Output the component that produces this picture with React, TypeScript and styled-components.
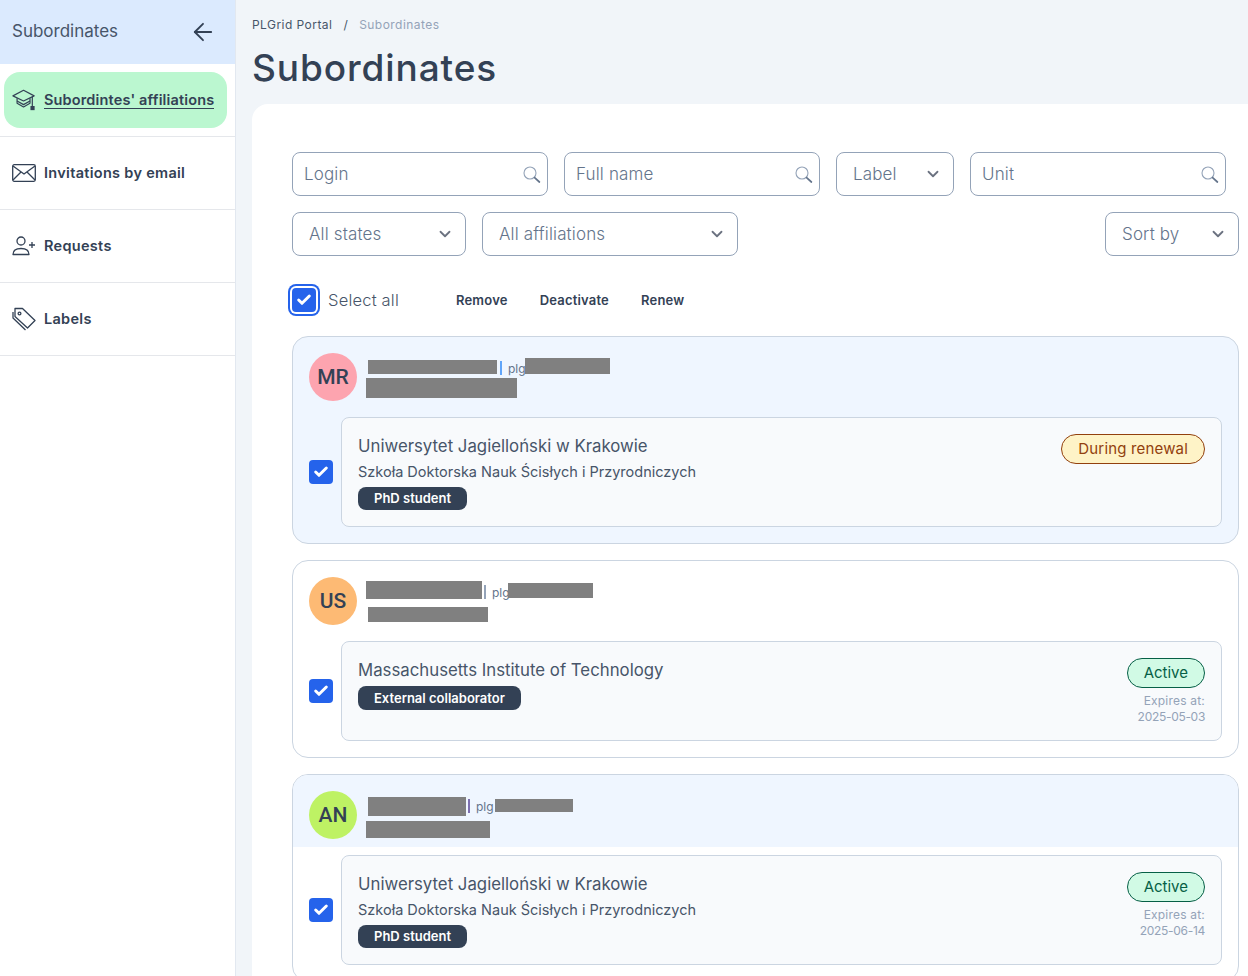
import { ArrowLeft, Check, ChevronDown } from 'lucide-react'
import styled, { createGlobalStyle } from 'styled-components'

const GlobalStyle = createGlobalStyle`
    html, body {
        margin: 0;
        height: 976px;
        overflow: hidden;
        background: #f1f5f9;
        color: #334155;
        font-family: Inter, 'Noto Sans', sans-serif;
    }
    * {
        box-sizing: border-box;
    }
`

function CapIcon() {
    return (
        <svg width='26' height='24' viewBox='0 0 26 24' fill='none' stroke='#334155' strokeWidth='1.3' strokeLinejoin='round'>
            <path d='M1 7.5 L12.5 1.5 L24 7.5 L12.5 13 Z' />
            <path d='M5.5 10 V15.5 L12.5 19.5 L19.5 15.5 V10' />
            <path d='M5.5 13 L12.5 17 L19.5 13' />
            <path d='M22 8.5 V19' />
            <rect x='20' y='18.5' width='4.5' height='4.5' fill='#334155' stroke='none' />
        </svg>
    )
}

function MailIcon() {
    return (
        <svg width='24' height='18' viewBox='0 0 24 18' fill='none' stroke='#334155' strokeWidth='1.3' strokeLinejoin='round'>
            <rect x='0.7' y='0.7' width='22.6' height='16.6' rx='1.5' />
            <path d='M1 2 L12 10 L23 2' />
            <path d='M1 16 L9 8 M23 16 L15 8' />
        </svg>
    )
}

function UserPlusIcon() {
    return (
        <svg width='24' height='20' viewBox='0 0 24 20' fill='none' stroke='#334155' strokeWidth='1.3' strokeLinejoin='round'>
            <circle cx='9' cy='5' r='4' />
            <path d='M1 18.5 C1 14.5 4 12.5 9 12.5 C14 12.5 17 14.5 17 18.5 Z' />
            <path d='M20 6 V12 M17 9 H23' />
        </svg>
    )
}

function TagsIcon() {
    return (
        <svg width='24' height='24' viewBox='0 0 24 24' fill='none' stroke='#334155' strokeWidth='1.3' strokeLinejoin='round'>
            <path d='M3 1.5 H10.5 L23 13.5 L15.5 21 L3 9.5 Z' />
            <circle cx='7.5' cy='6.5' r='1.4' />
            <path d='M1 5 V11 L13.5 23' />
        </svg>
    )
}

function SearchIcon() {
    return (
        <svg width='18' height='18' viewBox='0 0 18 18' fill='none' strokeLinecap='round'>
            <circle cx='7' cy='7' r='6' stroke='#94a3b8' strokeWidth='1.1' />
            <path d='M11.6 11.6 L16.4 16' stroke='#64748b' strokeWidth='1.7' />
        </svg>
    )
}

const navItems = [
    { label: "Subordintes' affiliations", icon: <CapIcon />, active: true },
    { label: 'Invitations by email', icon: <MailIcon /> },
    { label: 'Requests', icon: <UserPlusIcon /> },
    { label: 'Labels', icon: <TagsIcon /> },
]

type Block = { w: number; h: number; mt: number; ml: number }

type Person = {
    initials: string
    avatar: string
    tint: 'all' | 'head' | 'none'
    first: Block
    sep: string
    sepGap: number
    plgBlock: Block
    second: Block
    unit: string
    faculty?: string
    role: string
    status: 'renewal' | 'active'
    expires?: string
}

const people: Person[] = [
    {
        initials: 'MR',
        avatar: '#fda4af',
        tint: 'all',
        first: { w: 129, h: 14, mt: 7, ml: 2 },
        sep: '#60a5fa',
        sepGap: 3,
        plgBlock: { w: 85, h: 16, mt: 5, ml: 0 },
        second: { w: 151, h: 20, mt: 4, ml: 0 },
        unit: 'Uniwersytet Jagielloński w Krakowie',
        faculty: 'Szkoła Doktorska Nauk Ścisłych i Przyrodniczych',
        role: 'PhD student',
        status: 'renewal',
    },
    {
        initials: 'US',
        avatar: '#fdba74',
        tint: 'none',
        first: { w: 116, h: 18, mt: 4, ml: 0 },
        sep: '#94a3b8',
        sepGap: 2,
        plgBlock: { w: 85, h: 15, mt: 6, ml: -1 },
        second: { w: 120, h: 15, mt: 9, ml: 2 },
        unit: 'Massachusetts Institute of Technology',
        role: 'External collaborator',
        status: 'active',
        expires: '2025-05-03',
    },
    {
        initials: 'AN',
        avatar: '#bef264',
        tint: 'head',
        first: { w: 98, h: 19, mt: 6, ml: 2 },
        sep: '#7c6fb0',
        sepGap: 2,
        plgBlock: { w: 78, h: 13, mt: 8, ml: 2 },
        second: { w: 124, h: 17, mt: 9, ml: 0 },
        unit: 'Uniwersytet Jagielloński w Krakowie',
        faculty: 'Szkoła Doktorska Nauk Ścisłych i Przyrodniczych',
        role: 'PhD student',
        status: 'active',
        expires: '2025-06-14',
    },
]

function SearchField({ label }: { label: string }) {
    return (
        <Field $w={256} $pl={11}>
            <Placeholder>{label}</Placeholder>
            <FieldSearch>
                <SearchIcon />
            </FieldSearch>
        </Field>
    )
}

function SelectField({ label, w }: { label: string; w: number }) {
    return (
        <Field $w={w} $pl={16}>
            <Placeholder>{label}</Placeholder>
            <FieldChevron>
                <ChevronDown size={18} strokeWidth={2.4} />
            </FieldChevron>
        </Field>
    )
}

function Tick({ focused }: { focused?: boolean }) {
    return (
        <Checkbox $focused={focused}>
            <Check size={16} strokeWidth={4.4} color='#fff' />
        </Checkbox>
    )
}

function PersonCard({ person }: { person: Person }) {
    return (
        <Card $tint={person.tint === 'all'}>
            <CardHead $tint={person.tint === 'head'} $compact={person.tint === 'head'}>
                <Avatar $bg={person.avatar}>{person.initials}</Avatar>
                <Identity>
                    <NameRow>
                        <Redacted $b={person.first} />
                        <Separator $color={person.sep} $gap={person.sepGap} />
                        <Login>plg</Login>
                        <Redacted $b={person.plgBlock} />
                    </NameRow>
                    <Redacted $b={person.second} />
                </Identity>
            </CardHead>
            <CardBody $tight={person.tint === 'head'}>
                <Tick />
                <Affiliation>
                    <AffiliationText>
                        <UnitName>{person.unit}</UnitName>
                        {person.faculty && <Faculty>{person.faculty}</Faculty>}
                        <RoleTag $afterFaculty={!!person.faculty}>{person.role}</RoleTag>
                    </AffiliationText>
                    <StatusColumn>
                        <StatusPill $status={person.status}>
                            {person.status === 'renewal' ? 'During renewal' : 'Active'}
                        </StatusPill>
                        {person.expires && (
                            <Expires>
                                Expires at:
                                <br />
                                <ExpiresDate>{person.expires}</ExpiresDate>
                            </Expires>
                        )}
                    </StatusColumn>
                </Affiliation>
            </CardBody>
        </Card>
    )
}

export default function App() {
    return (
        <Page>
            <GlobalStyle />
            <Sidebar>
                <SideHeader>
                    <span>Subordinates</span>
                    <ArrowLeft size={28} strokeWidth={1.6} />
                </SideHeader>
                {navItems.map((item) => (
                    <NavRow key={item.label}>
                        <NavLink $active={item.active}>
                            <NavIcon>{item.icon}</NavIcon>
                            <NavLabel $active={item.active}>{item.label}</NavLabel>
                        </NavLink>
                    </NavRow>
                ))}
            </Sidebar>
            <Main>
                <Breadcrumb>
                    <span>PLGrid Portal</span>
                    <Slash>/</Slash>
                    <Current>Subordinates</Current>
                </Breadcrumb>
                <Title>Subordinates</Title>
                <Panel>
                    <FilterRow>
                        <SearchField label='Login' />
                        <SearchField label='Full name' />
                        <SelectField label='Label' w={118} />
                        <SearchField label='Unit' />
                    </FilterRow>
                    <FilterRow>
                        <SelectField label='All states' w={174} />
                        <SelectField label='All affiliations' w={256} />
                        <SortSlot>
                            <SelectField label='Sort by' w={134} />
                        </SortSlot>
                    </FilterRow>
                    <BulkRow>
                        <Tick focused />
                        <SelectAll>Select all</SelectAll>
                        <BulkActions>
                            <BulkButton>Remove</BulkButton>
                            <BulkButton>Deactivate</BulkButton>
                            <BulkButton>Renew</BulkButton>
                        </BulkActions>
                    </BulkRow>
                    <CardList>
                        {people.map((person) => (
                            <PersonCard key={person.initials} person={person} />
                        ))}
                    </CardList>
                </Panel>
            </Main>
        </Page>
    )
}

const Page = styled.div`
    display: flex;
    width: 1248px;
    height: 976px;
    overflow: hidden;
`

const Sidebar = styled.aside`
    flex: 0 0 236px;
    background: #fff;
    border-right: 1px solid #e2e8f0;
`

const SideHeader = styled.div`
    display: flex;
    align-items: center;
    justify-content: space-between;
    height: 64px;
    padding: 0 18px 0 12px;
    background: #dbeafe;
    font-size: 17px;
    color: #475569;

    span {
        margin-bottom: 2px;
    }

    svg {
        color: #334155;
    }
`

const NavRow = styled.div`
    height: 73px;
    padding: 8px 8px 8px 4px;
    border-bottom: 1px solid #e5e7eb;
`

const NavLink = styled.div<{ $active?: boolean }>`
    display: flex;
    align-items: center;
    gap: 8px;
    height: 56px;
    padding-left: 8px;
    border-radius: 16px;
    background: ${(p) => (p.$active ? '#bbf7d0' : 'transparent')};
`

const NavIcon = styled.span`
    display: flex;
    justify-content: center;
    width: 24px;
`

const NavLabel = styled.span<{ $active?: boolean }>`
    font-size: 14.5px;
    font-weight: 600;
    letter-spacing: ${(p) => (p.$active ? '0.15px' : '0.3px')};
    color: #334155;
    border-bottom: 1px solid ${(p) => (p.$active ? '#334155' : 'transparent')};
    margin-bottom: ${(p) => (p.$active ? '0' : '1px')};
`

const Main = styled.main`
    flex: 1;
    min-width: 0;
    padding-left: 16px;
`

const Breadcrumb = styled.div`
    display: flex;
    align-items: center;
    height: 18px;
    margin-top: 15px;
    font-size: 12px;
    letter-spacing: 0.45px;
    color: #475569;
`

const Slash = styled.span`
    margin: 0 11px;
`

const Current = styled.span`
    color: #94a3b8;
`

const Title = styled.h1`
    margin: 0;
    height: 71px;
    padding-top: 12px;
    font-size: 37px;
    line-height: 46px;
    font-weight: 500;
    letter-spacing: 0.9px;
    color: #334155;
`

const Panel = styled.section`
    width: 1000px;
    height: 900px;
    padding: 48px 0 0 40px;
    background: #fff;
    border-radius: 16px 0 0 0;
`

const FilterRow = styled.div`
    display: flex;
    gap: 16px;
    width: 947px;
    margin-bottom: 16px;
`

const Field = styled.div<{ $w: number; $pl: number }>`
    position: relative;
    display: flex;
    align-items: center;
    width: ${(p) => p.$w}px;
    height: 44px;
    padding-left: ${(p) => p.$pl}px;
    border: 1px solid #94a3b8;
    border-radius: 8px;
    background: #fff;
`

const Placeholder = styled.span`
    font-size: 17px;
    font-weight: 300;
    letter-spacing: 0.15px;
    color: #64748b;
`

const FieldSearch = styled.span`
    position: absolute;
    top: 13px;
    right: 6px;
    display: flex;
`

const FieldChevron = styled.span`
    position: absolute;
    top: 12px;
    right: 11px;
    display: flex;
    color: #6b7280;
`

const SortSlot = styled.div`
    margin-left: auto;
`

const BulkRow = styled.div`
    display: flex;
    align-items: center;
    height: 32px;
    margin: 28px 0 20px;
`

const Checkbox = styled.span<{ $focused?: boolean }>`
    display: flex;
    flex: 0 0 24px;
    align-items: center;
    justify-content: center;
    width: 24px;
    height: 24px;
    border-radius: 4px;
    background: #2563eb;
    box-shadow: ${(p) => (p.$focused ? '0 0 0 2px #fff, 0 0 0 4px #2563eb' : 'none')};
`

const SelectAll = styled.span`
    margin-left: 12px;
    font-size: 16.5px;
    font-weight: 300;
    letter-spacing: 0.2px;
    color: #475569;
`

const BulkActions = styled.div`
    display: flex;
    gap: 32px;
    margin-left: 57px;
`

const BulkButton = styled.span`
    font-size: 13px;
    font-weight: 600;
    letter-spacing: 0.2px;
    color: #334155;
`

const CardList = styled.div`
    display: flex;
    flex-direction: column;
    gap: 16px;
    width: 947px;
`

const Card = styled.article<{ $tint: boolean }>`
    overflow: hidden;
    border: 1px solid #cbd5e1;
    border-radius: 16px;
    background: ${(p) => (p.$tint ? '#eff6ff' : '#fff')};
`

const CardHead = styled.header<{ $tint: boolean; $compact: boolean }>`
    display: flex;
    gap: 9px;
    height: ${(p) => (p.$compact ? '72px' : '80px')};
    padding: 16px 16px 0;
    background: ${(p) => (p.$tint ? '#eff6ff' : 'transparent')};
`

const Avatar = styled.div<{ $bg: string }>`
    display: flex;
    flex: 0 0 48px;
    align-items: center;
    justify-content: center;
    height: 48px;
    padding-bottom: 1px;
    border-radius: 50%;
    background: ${(p) => p.$bg};
    font-family: Roboto, sans-serif;
    font-size: 21px;
    font-weight: 500;
    color: #334155;
`

const Identity = styled.div`
    display: flex;
    flex-direction: column;
    align-items: flex-start;
`

const NameRow = styled.div`
    display: flex;
    align-items: flex-start;
    height: 21px;
`

const Redacted = styled.div<{ $b: Block }>`
    flex: none;
    width: ${(p) => p.$b.w}px;
    height: ${(p) => p.$b.h}px;
    margin-top: ${(p) => p.$b.mt}px;
    margin-left: ${(p) => p.$b.ml}px;
    background: #808080;
`

const Separator = styled.span<{ $color: string; $gap: number }>`
    flex: none;
    width: 2px;
    height: 14px;
    margin: 8px 0 0 ${(p) => p.$gap}px;
    background: ${(p) => p.$color};
`

const Login = styled.span`
    width: 17px;
    margin: 8px 0 0 6px;
    font-size: 12px;
    line-height: 15px;
    color: #64748b;
`

const CardBody = styled.div<{ $tight: boolean }>`
    display: flex;
    align-items: center;
    gap: 8px;
    padding: ${(p) => (p.$tight ? '8px' : '0')} 16px 16px;
`

const Affiliation = styled.div`
    display: flex;
    flex: 1;
    justify-content: space-between;
    padding: 15px 16px;
    border: 1px solid #cbd5e1;
    border-radius: 8px;
    background: #f8fafc;
`

const AffiliationText = styled.div`
    display: flex;
    flex-direction: column;
    align-items: flex-start;
    padding-bottom: 1px;
`

const UnitName = styled.div`
    height: 26px;
    font-size: 16.8px;
    line-height: 26px;
    color: #475569;
`

const Faculty = styled.div`
    height: 26px;
    font-size: 14.5px;
    line-height: 26px;
    color: #475569;
`

const RoleTag = styled.span<{ $afterFaculty: boolean }>`
    height: ${(p) => (p.$afterFaculty ? '23px' : '24px')};
    margin-top: ${(p) => (p.$afterFaculty ? '2px' : '3px')};
    padding: 0 16px;
    border-radius: 8px;
    background: #334155;
    font-size: 13px;
    font-weight: 600;
    line-height: ${(p) => (p.$afterFaculty ? '23px' : '24px')};
    color: #fff;
`

const StatusColumn = styled.div`
    display: flex;
    flex-direction: column;
    align-items: flex-end;
    padding-top: 1px;
`

const StatusPill = styled.span<{ $status: 'renewal' | 'active' }>`
    height: 30px;
    padding: 0 16px;
    border: 1px solid ${(p) => (p.$status === 'renewal' ? '#92400e' : '#065f46')};
    border-radius: 15px;
    background: ${(p) => (p.$status === 'renewal' ? '#fef3c7' : '#d1fae5')};
    font-size: 15px;
    line-height: 28px;
    letter-spacing: ${(p) => (p.$status === 'renewal' ? '0.17px' : '0')};
    color: ${(p) => (p.$status === 'renewal' ? '#92400e' : '#065f46')};
`

const Expires = styled.div`
    margin-top: 5px;
    font-size: 12px;
    line-height: 16px;
    letter-spacing: 0.2px;
    text-align: right;
    color: #94a3b8;
`

const ExpiresDate = styled.span`
    letter-spacing: -0.3px;
`
